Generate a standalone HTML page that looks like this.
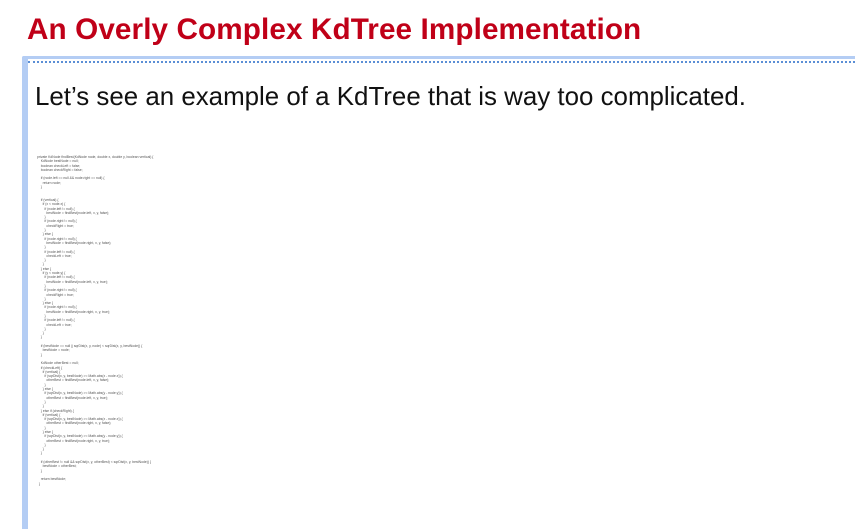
<!DOCTYPE html>
<html><head><style>
body{margin:0;width:855px;height:511px;background:#fff;overflow:hidden;position:relative;font-family:"Liberation Sans",sans-serif}
h1{position:absolute;left:27px;top:13px;margin:0;font-size:29.7px;font-weight:bold;color:#c00018;letter-spacing:0.1px}
.frame{position:absolute;left:22px;top:56px;width:840px;height:470px;border-top:3px solid #b4cdf4;border-left:6px solid #b4cdf4;border-radius:2px 0 0 0}
.dots{position:absolute;left:28px;top:61px;width:827px;border-top:2px dotted #5b8fd6}
.sub{position:absolute;left:35px;top:83px;font-size:25.9px;color:#111}
pre{position:absolute;left:37px;top:155px;margin:0;font-family:"Liberation Sans",sans-serif;font-size:3.4px;line-height:4.3px;color:#555}
</style></head><body>
<h1>An Overly Complex KdTree Implementation</h1>
<div class="frame"></div><div class="dots"></div>
<div class="sub">Let’s see an example of a KdTree that is way too complicated.</div>
<pre>private KdNode findBest(KdNode node, double x, double y, boolean vertical) {
    KdNode bestNode = null;
    boolean checkLeft = false;
    boolean checkRight = false;

    if (node.left == null &amp;&amp; node.right == null) {
      return node;
    }


    if (vertical) {
      if (x &lt; node.x) {
        if (node.left != null) {
          bestNode = findBest(node.left, x, y, false);
        }
        if (node.right != null) {
          checkRight = true;
        }
      } else {
        if (node.right != null) {
          bestNode = findBest(node.right, x, y, false);
        }
        if (node.left != null) {
          checkLeft = true;
        }
      }
    } else {
      if (y &lt; node.y) {
        if (node.left != null) {
          bestNode = findBest(node.left, x, y, true);
        }
        if (node.right != null) {
          checkRight = true;
        }
      } else {
        if (node.right != null) {
          bestNode = findBest(node.right, x, y, true);
        }
        if (node.left != null) {
          checkLeft = true;
        }
      }
    }

    if (bestNode == null || sqrDist(x, y, node) &lt; sqrDist(x, y, bestNode)) {
      bestNode = node;
    }

    KdNode otherBest = null;
    if (checkLeft) {
      if (vertical) {
        if (sqrDist(x, y, bestNode) &gt;= Math.abs(x - node.x)) {
          otherBest = findBest(node.left, x, y, false);
        }
      } else {
        if (sqrDist(x, y, bestNode) &gt;= Math.abs(y - node.y)) {
          otherBest = findBest(node.left, x, y, true);
        }
      }
    } else if (checkRight) {
      if (vertical) {
        if (sqrDist(x, y, bestNode) &gt;= Math.abs(x - node.x)) {
          otherBest = findBest(node.right, x, y, false);
        }
      } else {
        if (sqrDist(x, y, bestNode) &gt;= Math.abs(y - node.y)) {
          otherBest = findBest(node.right, x, y, true);
        }
      }
    }

    if (otherBest != null &amp;&amp; sqrDist(x, y, otherBest) &lt; sqrDist(x, y, bestNode)) {
      bestNode = otherBest;
    }

    return bestNode;
  }</pre>
</body></html>
